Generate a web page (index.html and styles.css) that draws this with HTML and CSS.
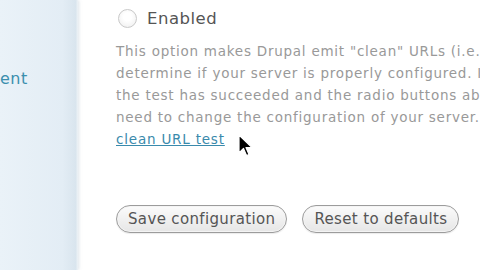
FILE: index.html
```
<!DOCTYPE html>
<html>
<head>
<meta charset="utf-8">
<link rel="stylesheet" href="styles.css">
</head>
<body>
<div class="page">
  <aside class="sidebar">
    <div class="nav-item">ent</div>
  </aside>
  <main class="content">
    <label class="radio-row">
      <span class="radio"></span>
      <span class="radio-label">Enabled</span>
    </label>
    <div class="description">
      <div class="line">This option makes Drupal emit "clean" URLs (i.e. without ?q= in the URL). You must run the</div>
      <div class="line">determine if your server is properly configured. If you are able to see this page again</div>
      <div class="line">the test has succeeded and the radio buttons above are available. If not, you</div>
      <div class="line">need to change the configuration of your server.</div>
      <div class="line"><a class="link" href="#">clean URL test</a></div>
    </div>
    <div class="buttons">
      <button class="btn">Save configuration</button>
      <button class="btn">Reset to defaults</button>
    </div>
    <svg class="cursor" width="16" height="24" viewBox="0 0 16 24">
      <path d="M1 1 L1 19 L5.5 14.5 L8.5 21.5 L11 20.5 L8 13.5 L14 13.5 Z" fill="#000" stroke="#fff" stroke-width="1.2" stroke-linejoin="round"/>
    </svg>
  </main>
</div>
</body>
</html>
```
FILE: styles.css
```
html, body {
  margin: 0;
  padding: 0;
  width: 480px;
  height: 270px;
  overflow: hidden;
  background: #fff;
}
.page {
  display: flex;
  width: 480px;
  height: 270px;
  font-family: "DejaVu Sans", Verdana, sans-serif;
}
.sidebar {
  width: 78px;
  flex: none;
  background: linear-gradient(to right, #eaf2f8 0%, #e3edf5 80%, #d9e5ee 97%, #eef3f6 100%);
  box-shadow: 1px 0 3px rgba(160,180,195,0.35);
  padding-top: 69px;
  box-sizing: border-box;
}
.nav-item {
  font-size: 16px;
  color: #3b8fae;
  line-height: 20px;
  letter-spacing: 0.5px;
}
.content {
  position: relative;
  flex: 1;
  padding-left: 38px;
  padding-top: 8px;
  overflow: hidden;
}
.radio-row {
  display: flex;
  align-items: center;
  gap: 10px;
  height: 20px;
}
.radio {
  width: 19px;
  height: 19px;
  box-sizing: border-box;
  border-radius: 50%;
  border: 1px solid #c9c9c9;
  background: radial-gradient(circle at 50% 40%, #ffffff 30%, #ececec 100%);
  margin-left: 2px;
}
.radio-label {
  font-size: 16.5px;
  color: #555;
  letter-spacing: 0.5px;
}
.description {
  margin-top: 12px;
  font-size: 13.5px;
  line-height: 22px;
  color: #999;
  letter-spacing: 0.75px;
}
.line {
  white-space: nowrap;
}
.link {
  color: #3a8aac;
  text-decoration: underline;
  letter-spacing: 0.8px;
}
.buttons {
  display: flex;
  gap: 15px;
  margin-top: 55px;
}
.btn {
  height: 28px;
  padding: 0 11px;
  border-radius: 14px;
  border: 1px solid #9c9c9c;
  background: linear-gradient(#fbfbfb, #e6e6e6);
  box-shadow: inset 0 0 0 1px #f4f4f4, 0 1px 1px rgba(0,0,0,0.08);
  font-family: "DejaVu Sans", Verdana, sans-serif;
  font-size: 15px;
  letter-spacing: 0.35px;
  color: #555;
}
.cursor {
  position: absolute;
  left: 160px;
  top: 134px;
}
```
